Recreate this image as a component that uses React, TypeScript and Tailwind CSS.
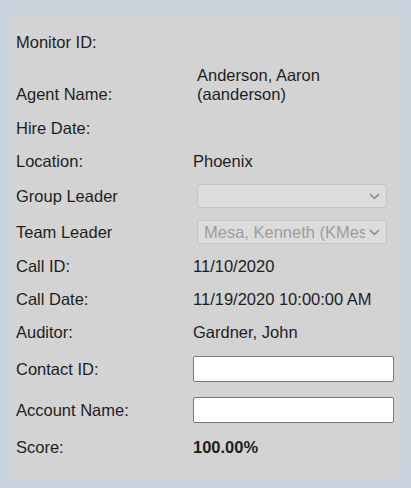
import React from "react";

function Chevron() {
	return (
		<svg width="11" height="7" viewBox="0 0 11 7" className="flex-none">
			<path d="M1 1.2 L5.5 5.4 L10 1.2" fill="none" stroke="#8f8f8f" strokeWidth="1.6" />
		</svg>
	);
}

function DisabledSelect({ value }: { value?: string }) {
	return (
		<div className="ml-[4px] flex items-center w-[190px] h-[24px] bg-[#dcdcdc] border border-[#c4c4c4] rounded-[2px] pl-[6px] pr-[6px]">
			<span className="flex-1 overflow-hidden whitespace-nowrap text-[#9c9c9c] leading-[19px] mr-[4px]">
				{value}
			</span>
			<Chevron />
		</div>
	);
}

function TextBox() {
	return (
		<input
			type="text"
			className="w-[201px] h-[26px] bg-white border border-[#7a7a7a] rounded-[2px] outline-none px-1"
		/>
	);
}

function Row({
	label,
	h,
	children,
}: {
	label: React.ReactNode;
	h: string;
	children?: React.ReactNode;
}) {
	return (
		<div className={`flex items-center ${h}`}>
			<div className="w-[177px] flex-none">{label}</div>
			<div className="flex-1">{children}</div>
		</div>
	);
}

export default function App() {
	return (
		<div
			className="min-h-screen bg-[#c9d3dd] pt-[14px] px-[9px] text-[16.5px] leading-[19px] text-[#1e1e1e]"
			style={{ fontFamily: '"Liberation Sans", Arial, sans-serif' }}
		>
			<div className="w-[393px] h-[463px] bg-[#d3d3d3] rounded-[3px] pt-[12px] pl-[7px]">
				<Row label="Monitor ID:" h="h-[32px]" />
				<div className="flex items-center h-[54px]">
					<div className="w-[177px] flex-none pt-[19px]">Agent Name:</div>
					<div className="flex-1 pl-[4px]">
						<div>Anderson, Aaron</div>
						<div>(aanderson)</div>
					</div>
				</div>
				<Row label="Hire Date:" h="h-[32px]" />
				<Row label="Location:" h="h-[34px]">
					Phoenix
				</Row>
				<Row label="Group Leader" h="h-[36px]">
					<DisabledSelect />
				</Row>
				<Row label="Team Leader" h="h-[36px]">
					<DisabledSelect value="Mesa, Kenneth (KMesa)" />
				</Row>
				<Row label="Call ID:" h="h-[32px]">
					11/10/2020
				</Row>
				<Row label="Call Date:" h="h-[34px]">
					11/19/2020 10:00:00 AM
				</Row>
				<Row label="Auditor:" h="h-[32px]">
					Gardner, John
				</Row>
				<Row label="Contact ID:" h="h-[42px]">
					<TextBox />
				</Row>
				<Row label="Account Name:" h="h-[40px]">
					<TextBox />
				</Row>
				<Row label="Score:" h="h-[34px]">
					<span className="font-bold">100.00%</span>
				</Row>
			</div>
		</div>
	);
}
